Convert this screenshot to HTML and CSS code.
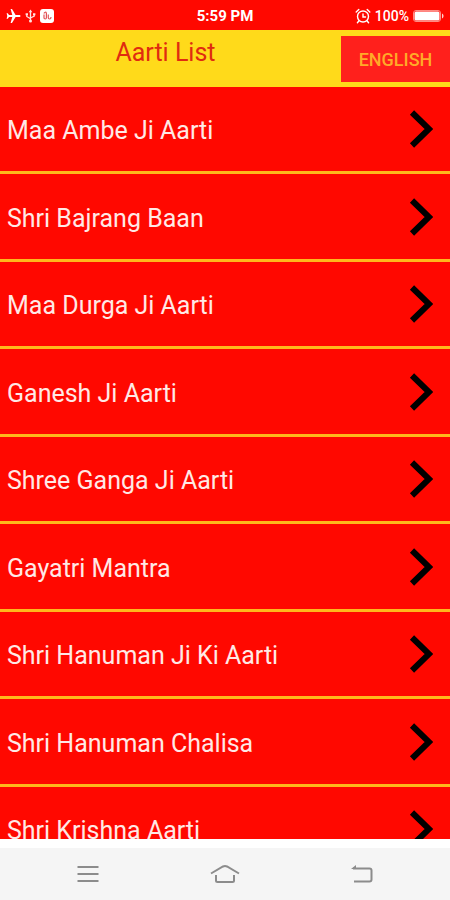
FILE: index.html
```html
<!DOCTYPE html>
<html lang="en">
<head>
<meta charset="utf-8">
<meta name="viewport" content="width=device-width, initial-scale=1">
<title>Aarti List</title>
<link rel="stylesheet" href="styles.css">
</head>
<body>
<div class="status">
  <div class="status-left">
    <svg width="15" height="16" viewBox="0 0 15 16" fill="#fff" aria-hidden="true"><path d="M14.5 8c0-.8-.7-1.1-1.3-1.1H9.600L6 1H4.600l1.700 5.900H3L1.800 5.300H.6L1.300 8l-.7 2.700h1.200L3 9.100h3.300L4.600 15H6l3.600-5.900h3.600c.6 0 1.300-.3 1.300-1.100z"/></svg>
    <svg width="11" height="14" viewBox="0 0 11 14" fill="none" stroke="#ffe4e0" stroke-width="1.300" aria-hidden="true"><path d="M5.500 3v8M1.800 5.500v2l3.700 2.300M9.200 5.500v1.700L5.500 9"/><path d="M5.500.5l1.800 2.800H3.700zM.6 4.300h2.400v2H.6zM8 4.300h2.400v2H8z" fill="#ffe4e0" stroke="none"/><circle cx="5.500" cy="12" r="1.500" fill="#ffe4e0" stroke="none"/></svg>
    <svg width="14" height="14" viewBox="0 0 14 14" fill="none" aria-hidden="true"><rect width="14" height="14" rx="3" fill="#fff"/><path d="M4 5.500v4M4 4.500c.4-1.600 2-1.700 2.400-.3v4.600c0 1.600-2.200 1.600-2.400 0M8.300 5.500v3.300c0 1.600 2.600 1.600 2.600 0V8" stroke="#e2555a" stroke-width="1.200"/></svg>
  </div>
  <span class="time">5:59 PM</span>
  <div class="status-right">
    <svg width="16" height="16" viewBox="0 0 16 16" fill="none" stroke="#fff" stroke-width="1.400" stroke-linecap="round" aria-hidden="true"><circle cx="8" cy="8.500" r="5.500"/><path d="M1.200 4l2.600-2.500M14.800 4l-2.600-2.500M3.800 13l-1.400 1.700M12.200 13l1.400 1.700M8 6v3h2.500"/></svg>
    <span>100%</span>
    <svg width="31" height="12" viewBox="0 0 31 12" fill="none" aria-hidden="true"><rect x=".5" y=".5" width="27" height="11" rx="2.500" stroke="#ff8c84"/><rect x="1.500" y="1.500" width="25" height="9" rx="1.500" fill="#fff"/><path d="M29 3.500c2 .8 2 4.200 0 5z" fill="#ffd0cc"/></svg>
  </div>
</div>
<header class="header">
  <h1>Aarti List</h1>
  <button class="language" type="button">ENGLISH</button>
</header>
<main class="content">
  <ul class="list">
    <li><a href="#ambe"><span>Maa Ambe Ji Aarti</span><svg class="chevron" viewBox="0 0 24 40" aria-hidden="true"><path d="M3 3.500L20 20 3 36.500"/></svg></a></li>
    <li><a href="#bajrang"><span>Shri Bajrang Baan</span><svg class="chevron" viewBox="0 0 24 40" aria-hidden="true"><path d="M3 3.500L20 20 3 36.500"/></svg></a></li>
    <li><a href="#durga"><span>Maa Durga Ji Aarti</span><svg class="chevron" viewBox="0 0 24 40" aria-hidden="true"><path d="M3 3.500L20 20 3 36.500"/></svg></a></li>
    <li><a href="#ganesh"><span>Ganesh Ji Aarti</span><svg class="chevron" viewBox="0 0 24 40" aria-hidden="true"><path d="M3 3.500L20 20 3 36.500"/></svg></a></li>
    <li><a href="#ganga"><span>Shree Ganga Ji Aarti</span><svg class="chevron" viewBox="0 0 24 40" aria-hidden="true"><path d="M3 3.500L20 20 3 36.500"/></svg></a></li>
    <li><a href="#gayatri"><span>Gayatri Mantra</span><svg class="chevron" viewBox="0 0 24 40" aria-hidden="true"><path d="M3 3.500L20 20 3 36.500"/></svg></a></li>
    <li><a href="#hanuman"><span>Shri Hanuman Ji Ki Aarti</span><svg class="chevron" viewBox="0 0 24 40" aria-hidden="true"><path d="M3 3.500L20 20 3 36.500"/></svg></a></li>
    <li><a href="#chalisa"><span>Shri Hanuman Chalisa</span><svg class="chevron" viewBox="0 0 24 40" aria-hidden="true"><path d="M3 3.500L20 20 3 36.500"/></svg></a></li>
    <li><a href="#krishna"><span>Shri Krishna Aarti</span><svg class="chevron" viewBox="0 0 24 40" aria-hidden="true"><path d="M3 3.500L20 20 3 36.500"/></svg></a></li>
  </ul>
</main>
<nav class="navbar">
  <button type="button" aria-label="Menu"><svg width="22" height="18" viewBox="0 0 22 18" aria-hidden="true"><path d="M.5 2h21M.5 9h21M.5 16h21"/></svg></button>
  <button type="button" aria-label="Home"><svg width="30" height="20" viewBox="0 0 30 20" aria-hidden="true"><path d="M1 9.500L13 2.500q2-1 4 0L29 9.500M6 11v5.500q0 1.500 1.500 1.500h15q1.500 0 1.500-1.500V11"/></svg></button>
  <button type="button" aria-label="Back"><svg width="22" height="18" viewBox="0 0 22 18" aria-hidden="true"><path d="M2 3.500h16.500q2 0 2 2v9q0 2-2 2H3"/><path class="solid" d="M0 4L5 0v4z"/></svg></button>
</nav>
</body>
</html>
```

FILE: styles.css
```css
* {
  box-sizing: border-box;
}

body {
  margin: 0;
  height: 100vh;
  display: flex;
  flex-direction: column;
  background: #fff;
  font-family: Roboto, "Liberation Sans", sans-serif;
}

.status {
  flex: none;
  height: 30px;
  padding: 2px 6px 0;
  display: grid;
  grid-template-columns: 1fr auto 1fr;
  align-items: center;
  background: #ff0800;
  color: #fff;
  font-size: 14px;
  font-weight: 500;
}

.status-left,
.status-right {
  display: flex;
  align-items: center;
  gap: 4px;
}

.status-right {
  justify-content: flex-end;
}

.time {
  font-size: 15px;
  font-weight: 700;
}

.header {
  flex: none;
  height: 57px;
  display: grid;
  grid-template-columns: 1fr 109px;
  align-items: start;
  background: #ffda1a;
}

.header h1 {
  margin: 0;
  padding: 7px 10px 0 0;
  color: #e02b10;
  font-size: 25px;
  line-height: 32px;
  font-weight: 400;
  text-align: center;
}

.language {
  height: 46px;
  margin-top: 6px;
  padding: 0;
  border: 0;
  background: #ff201c;
  color: #ffaa28;
  font: 500 18px Roboto, "Liberation Sans", sans-serif;
}

.content {
  flex: 1;
  min-height: 0;
  overflow: hidden;
  margin-bottom: 9px;
  background: #ff0800;
}

.list {
  margin: 0;
  padding: 0;
  list-style: none;
}

.list a {
  height: 87px;
  padding: 0 17px 0 7px;
  display: flex;
  align-items: center;
  justify-content: space-between;
  border-bottom: 3px solid #ffb81c;
  color: #ffe9e6;
  font-size: 25px;
  line-height: 32px;
  text-decoration: none;
}

.list li:nth-child(even) a {
  height: 88px;
}

.list span {
  padding-top: 4px;
}

.chevron {
  width: 24px;
  height: 40px;
  fill: none;
  stroke: #000;
  stroke-width: 6;
}

.navbar {
  flex: none;
  height: 52px;
  padding: 0 20px;
  display: grid;
  grid-template-columns: repeat(3, 1fr);
  background: #f5f5f5;
}

.navbar button {
  padding: 0;
  display: flex;
  align-items: center;
  justify-content: center;
  border: 0;
  background: none;
}

.navbar svg {
  fill: none;
  stroke: #8c8c8c;
  stroke-width: 2;
}

.navbar .solid {
  fill: #8c8c8c;
  stroke: none;
}
```
